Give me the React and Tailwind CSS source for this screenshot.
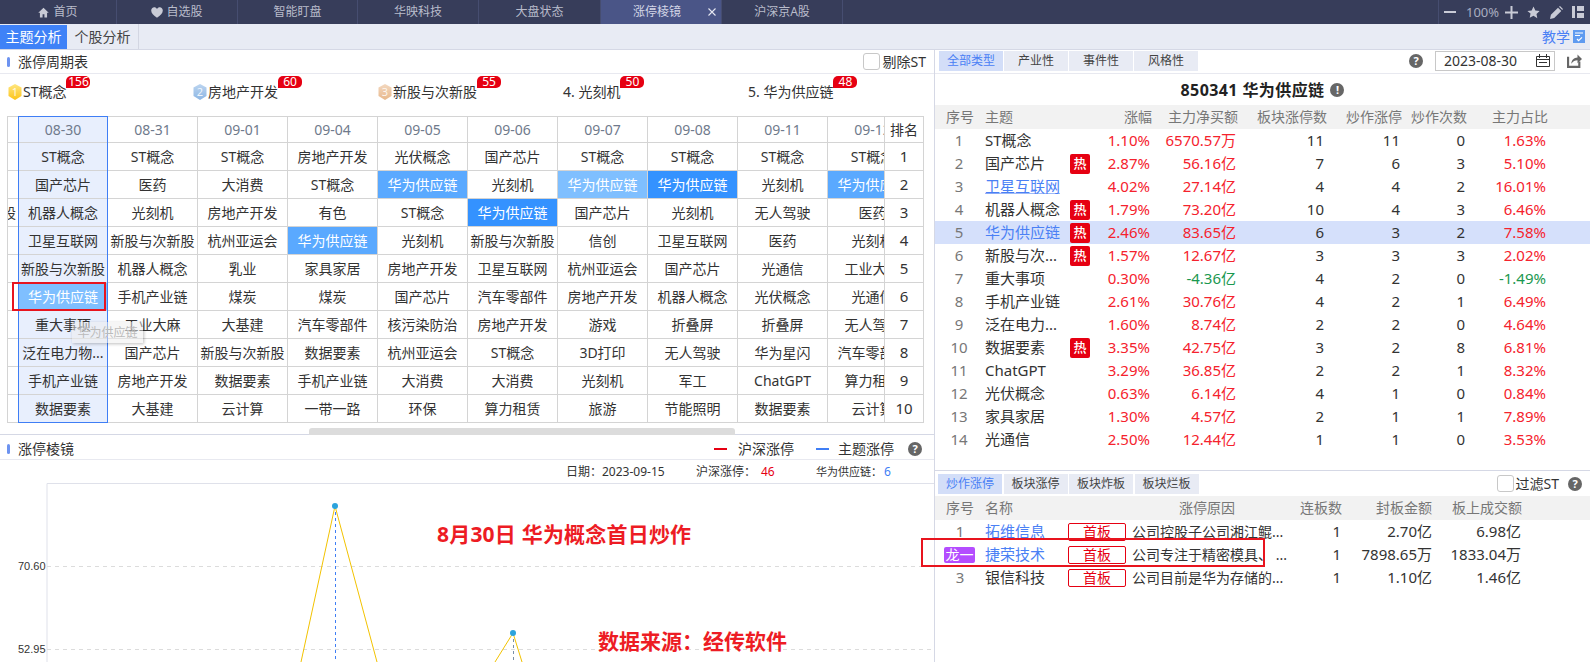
import React from "react";

const Q = ({ className = "" }) => (
  <span className={"flex h-[14px] w-[14px] shrink-0 items-center justify-center rounded-full bg-[#666] text-[11px] font-bold leading-none text-white " + className}>?</span>
);

const navTabs = [
  ["w-[117px]", "首页", "home"],
  ["w-[121px]", "自选股", "heart"],
  ["w-[120px]", "智能盯盘"],
  ["w-[121px]", "华映科技"],
  ["w-[122px]", "大盘状态"],
  ["w-[121px]", "涨停棱镜", "active"],
  ["w-[121px]", "沪深京A股"],
];

function TopBar() {
  return (
    <div className="flex h-6 shrink-0 bg-[#373d5a] text-xs text-[#b9bccb]">
      {navTabs.map(([w, label, kind]) => (
        <div
          key={label}
          className={`relative flex h-full items-center justify-center border-r border-[#464d70] leading-none ${w} ${kind === "active" ? "bg-[#4a5587] pr-2 text-[#d3d6e6]" : ""}`}
        >
          {kind === "home" && (
            <svg width="11" height="11" viewBox="0 0 12 12" className="mr-1">
              <path d="M6 .8 .3 6.2h1.8V11.4h2.9V7.8h2V11.4h2.9V6.2h1.8z" fill="#c9cbd6" />
            </svg>
          )}
          {kind === "heart" && (
            <svg width="12" height="11" viewBox="0 0 12 11" className="mr-[3px]">
              <path d="M6 10.8C2.5 8.2.2 6.2.2 3.5.2 1.6 1.6.3 3.2.3 4.4.3 5.4.9 6 1.9 6.6.9 7.6.3 8.8.3c1.6 0 3 1.3 3 3.2 0 2.7-2.3 4.7-5.8 7.3z" fill="#c9cbd6" />
            </svg>
          )}
          {label}
          {kind === "active" && (
            <svg width="8" height="8" viewBox="0 0 8 8" className="absolute right-[5px] top-[8px]">
              <path d="M.5.5l7 7M7.5.5l-7 7" stroke="#e6e8f2" strokeWidth="1.1" />
            </svg>
          )}
        </div>
      ))}
      <div className="ml-auto flex h-full w-[152px] items-center border-l border-[#464d70] pl-[5px]">
        <svg width="12" height="12" viewBox="0 0 12 12"><rect x="0" y="5" width="12" height="2" fill="#c9cbd6" /></svg>
        <span className="ml-[10px] w-[31px] text-center text-[13px] leading-none text-[#a9adc0]">100%</span>
        <svg width="13" height="13" viewBox="0 0 13 13" className="ml-[8px]"><path d="M5.5 0h2v5.500H13v2H7.500V13h-2V7.500H0v-2h5.500z" fill="#c9cbd6" /></svg>
        <svg width="13" height="13" viewBox="0 0 24 24" className="ml-[9px]"><path d="M12 1l3.400 7.300 7.900 1-5.800 5.400 1.500 7.900L12 18l-7 3.600 1.500-7.900L.7 9.300l7.900-1z" fill="#c9cbd6" /></svg>
        <svg width="13" height="13" viewBox="0 0 13 13" className="ml-[10px]"><path d="M0 13l.9-4.200L8 1.700l3.300 3.300-7.100 7.100zM9 .7l1-.7 3 3-.8 1z" fill="#c9cbd6" /></svg>
        <svg width="12" height="12" viewBox="0 0 12 12" className="ml-[9px]"><path d="M0 0h3v12H0zM5 0h7v5H5zM5 7h7v5H5z" fill="#c9cbd6" /></svg>
      </div>
    </div>
  );
}

function SubBar() {
  return (
    <div className="flex h-[26px] shrink-0 items-stretch border-b border-[#d5d8e5] bg-[#e8ebf4] text-sm leading-none">
      <div className="mt-px flex w-[67px] items-center justify-center bg-[#3f82f7] text-white">主题分析</div>
      <div className="flex w-[72px] items-center justify-center border-r border-[#d3d6e2] text-[#444]">个股分析</div>
      <div className="ml-auto flex items-center pr-[5px] text-[#4a80f5]">
        教学
        <svg width="12" height="13" viewBox="0 0 12 13" className="ml-[3px]">
          <rect width="12" height="13" fill="#5f9bf0" />
          <path d="M2 3h8M2 5.500h5" stroke="#fff" strokeWidth="1" />
          <path d="M4 9l1.600 1.600L9 7.400" stroke="#fff" strokeWidth="1.200" fill="none" />
        </svg>
      </div>
    </div>
  );
}

const Hex = ({ n, c1, c2 }) => (
  <svg width="14" height="16" viewBox="0 0 14 16" className="mr-px shrink-0">
    <defs>
      <linearGradient id={"h" + n} x1="0" y1="0" x2="0" y2="1">
        <stop offset="0" stopColor={c1} />
        <stop offset="1" stopColor={c2} />
      </linearGradient>
    </defs>
    <polygon points="7,0 13.5,3.5 13.5,12 7,16 .5,12 .5,3.5" fill={`url(#h${n})`} />
    <text x="7" y="12" textAnchor="middle" fontSize="11" fill="#fff" fillOpacity="0.85">{n}</text>
  </svg>
);

const ranks = [
  { t: "ST概念", c: 156, icon: <Hex n="1" c1="#ffe680" c2="#fcc419" /> },
  { t: "房地产开发", c: 60, icon: <Hex n="2" c1="#bcd5f0" c2="#8db6e4" /> },
  { t: "新股与次新股", c: 55, icon: <Hex n="3" c1="#f3d8bf" c2="#e8b88c" /> },
  { t: "4. 光刻机", c: 50 },
  { t: "5. 华为供应链", c: 48 },
];

function RankRow() {
  return (
    <div className="flex h-[42px] shrink-0 pl-2">
      {ranks.map((r) => (
        <div key={r.t} className="w-[185px] pt-[8px]">
          <div className="relative flex h-5 w-fit items-center text-sm leading-5 text-[#333]">
            {r.icon}
            {r.t}
            <span className="absolute left-full top-[-6px] flex h-3 w-6 items-center justify-center rounded-[5px] rounded-bl-none bg-[#e60012] text-xs leading-none text-white">{r.c}</span>
          </div>
        </div>
      ))}
    </div>
  );
}

const M = "bg-[#5aa9ff] text-white";
const S = "bg-[#3492ff] text-white";
const L = "bg-[#7fbfff] text-white";

const columns = [
  ["08-30", ["ST概念", "国产芯片", "机器人概念", "卫星互联网", "新股与次新股", "华为供应链", "重大事项", "泛在电力物...", "手机产业链", "数据要素"], { 5: L }],
  ["08-31", ["ST概念", "医药", "光刻机", "新股与次新股", "机器人概念", "手机产业链", "工业大麻", "国产芯片", "房地产开发", "大基建"], {}],
  ["09-01", ["ST概念", "大消费", "房地产开发", "杭州亚运会", "乳业", "煤炭", "大基建", "新股与次新股", "数据要素", "云计算"], {}],
  ["09-04", ["房地产开发", "ST概念", "有色", "华为供应链", "家具家居", "煤炭", "汽车零部件", "数据要素", "手机产业链", "一带一路"], { 3: M }],
  ["09-05", ["光伏概念", "华为供应链", "ST概念", "光刻机", "房地产开发", "国产芯片", "核污染防治", "杭州亚运会", "大消费", "环保"], { 1: M }],
  ["09-06", ["国产芯片", "光刻机", "华为供应链", "新股与次新股", "卫星互联网", "汽车零部件", "房地产开发", "ST概念", "大消费", "算力租赁"], { 2: S }],
  ["09-07", ["ST概念", "华为供应链", "国产芯片", "信创", "杭州亚运会", "房地产开发", "游戏", "3D打印", "光刻机", "旅游"], { 1: L }],
  ["09-08", ["ST概念", "华为供应链", "光刻机", "卫星互联网", "国产芯片", "机器人概念", "折叠屏", "无人驾驶", "军工", "节能照明"], { 1: S }],
  ["09-11", ["ST概念", "光刻机", "无人驾驶", "医药", "光通信", "光伏概念", "折叠屏", "华为星闪", "ChatGPT", "数据要素"], {}],
  ["09-12", ["ST概念", "华为供应链", "医药", "光刻机", "工业大麻", "光通信", "无人驾驶", "汽车零部件", "算力租赁", "云计算"], { 1: M }],
];

function Cell({ className = "", last, children }) {
  return (
    <div className={`flex shrink-0 items-center justify-center whitespace-nowrap border-[#d4d4d4] text-sm leading-none ${last ? "h-[27px]" : "h-[28px] border-b"} ${className}`}>
      {children}
    </div>
  );
}

function Table() {
  const nums = [1, 2, 3, 4, 5, 6, 7, 8, 9, 10];
  return (
    <div className="ml-[7px] flex h-[307px] w-[917px] shrink-0 text-[#333]">
      <div className="flex w-[11px] shrink-0 flex-col overflow-hidden border-y border-l border-[#d4d4d4]">
        <div className="h-[26px] shrink-0 border-b border-[#d4d4d4]" />
        {nums.map((n) => (
          <Cell key={n} last={n === 10} className="!justify-end">
            {n === 3 ? <span className="mr-[2px] w-[8px] overflow-hidden"><span className="-ml-[6px] block">股</span></span> : null}
          </Cell>
        ))}
      </div>
      <div className="flex w-[866px] shrink-0 overflow-hidden">
        {columns.map(([date, items, marks], c) => (
          <div
            key={date}
            className={`flex h-[307px] w-[90px] shrink-0 flex-col border-y border-r ${c === 0 ? "border-l border-[#3f7ef5] bg-[#e8effd]" : "border-[#d4d4d4]"}`}
          >
            <div className="flex h-[26px] shrink-0 items-center justify-center border-b border-[#d4d4d4] text-sm leading-none text-[#6f7a8c]">{date}</div>
            {items.map((t, i) => (
              <Cell key={i} last={i === 9} className={marks[i] || ""}>{t}</Cell>
            ))}
          </div>
        ))}
      </div>
      <div className="flex w-[40px] shrink-0 flex-col border-y border-x border-[#d4d4d4]">
        <div className="flex h-[26px] shrink-0 items-center justify-center border-b border-[#d4d4d4] text-sm leading-none">排名</div>
        {nums.map((n) => (
          <Cell key={n} last={n === 10} className="text-[15px]">{n}</Cell>
        ))}
      </div>
    </div>
  );
}

const SectionMark = () => <span className="mr-[8px] h-[10px] w-[3px] shrink-0 rounded-full bg-[#6d93f0]" />;

function Chart() {
  return (
    <div className="relative min-h-0 flex-1">
      <svg width="934" height="179" viewBox="0 0 934 179" className="block">
        <path d="M47 179V.5H934" stroke="#dfe1ea" fill="none" />
        <path d="M47 83.500H934M47 166.500H934" stroke="#dcdcdc" strokeDasharray="4 4" fill="none" />
        <text x="18" y="87" fontSize="11" fill="#333" fontFamily="Liberation Sans">70.60</text>
        <text x="18" y="170" fontSize="11" fill="#333" fontFamily="Liberation Sans">52.95</text>
        <path d="M335.500 23V179" stroke="#3f7ef5" strokeDasharray="3 3" />
        <path d="M513.500 150V179" stroke="#7a8fa8" strokeDasharray="3 3" />
        <path d="M301 179 335 23 377 179M495 179 513 150 522 179" stroke="#f2c200" fill="none" />
        <circle cx="335" cy="23" r="3" fill="#2ba3dd" />
        <circle cx="513" cy="150" r="3" fill="#2ba3dd" />
      </svg>
      <div className="absolute left-[437px] top-[36px] whitespace-nowrap text-[21px] font-bold leading-[30px] tracking-[0.2px] text-[#ed1c24]">8月30日 华为概念首日炒作</div>
      <div className="absolute left-[598px] top-[143px] whitespace-nowrap text-[21px] font-bold leading-[30px] text-[#ed1c24]">数据来源：经传软件</div>
    </div>
  );
}

function LeftPanel() {
  return (
    <div className="flex h-full w-[935px] shrink-0 flex-col border-r border-[#d5d8e5]">
      <div className="flex h-6 shrink-0 items-center border-b border-[#e8e9f0] pl-[7px] text-sm leading-none text-[#333]">
        <SectionMark />
        涨停周期表
        <span className="ml-auto mr-[3px] h-[17px] w-[17px] rounded-[3px] border border-[#c8c8c8]" />
        <span className="mr-[8px]">剔除ST</span>
      </div>
      <RankRow />
      <Table />
      <div className="flex h-3 shrink-0 items-start border-b border-[#d5d8e5] pl-[309px] pt-[5px]">
        <div className="h-[7px] w-[426px] rounded-t-[3px] bg-[#dcdcdc]" />
      </div>
      <div className="flex h-[25px] shrink-0 items-center border-b border-[#e8e9f0] pl-[7px] pt-[3px] text-sm leading-none text-[#333]">
        <SectionMark />
        涨停棱镜
        <span className="ml-[640px] h-[2px] w-[13px] bg-[#e60012]" />
        <span className="ml-[11px]">沪深涨停</span>
        <span className="ml-[22px] h-[2px] w-[13px] bg-[#3f7ef5]" />
        <span className="ml-[9px]">主题涨停</span>
        <Q className="ml-[14px]" />
      </div>
      <div className="flex h-[23px] shrink-0 items-center whitespace-nowrap pl-[566px] text-xs leading-none text-[#333]">
        <span className="w-[130px]">日期：2023-09-15</span>
        <span className="w-[65px]">沪深涨停：</span>
        <span className="w-[55px] text-[#e60012]">46</span>
        <span className="w-[68px] text-[11px]">华为供应链：</span>
        <span className="text-[#3f7ef5]">6</span>
      </div>
      <Chart />
    </div>
  );
}

const Badge = () => (
  <span className="flex h-5 w-5 items-center justify-center rounded-[2px] bg-[#e60012] text-[13px] font-medium leading-none text-white">热</span>
);

const R = "text-[#f5222d]";
const G = "text-[#1a9850]";
const mainRows = [
  ["ST概念", 0, "1.10%", "6570.57万", 11, 11, 0, "1.63%"],
  ["国产芯片", 1, "2.87%", "56.16亿", 7, 6, 3, "5.10%"],
  ["卫星互联网", 0, "4.02%", "27.14亿", 4, 4, 2, "16.01%", "link"],
  ["机器人概念", 1, "1.79%", "73.20亿", 10, 4, 3, "6.46%"],
  ["华为供应链", 1, "2.46%", "83.65亿", 6, 3, 2, "7.58%", "sel"],
  ["新股与次...", 1, "1.57%", "12.67亿", 3, 3, 3, "2.02%"],
  ["重大事项", 0, "0.30%", "-4.36亿", 4, 2, 0, "-1.49%"],
  ["手机产业链", 0, "2.61%", "30.76亿", 4, 2, 1, "6.49%"],
  ["泛在电力...", 0, "1.60%", "8.74亿", 2, 2, 0, "4.64%"],
  ["数据要素", 1, "3.35%", "42.75亿", 3, 2, 8, "6.81%"],
  ["ChatGPT", 0, "3.29%", "36.85亿", 2, 2, 1, "8.32%"],
  ["光伏概念", 0, "0.63%", "6.14亿", 4, 1, 0, "0.84%"],
  ["家具家居", 0, "1.30%", "4.57亿", 2, 1, 1, "7.89%"],
  ["光通信", 0, "2.50%", "12.44亿", 1, 1, 0, "3.53%"],
];
const mainGrid = "grid grid-cols-[48px_87px_20px_62px_86px_89px_75px_65px_81px] items-center";

function MainTable() {
  return (
    <div className="shrink-0">
      <div className={`${mainGrid} h-6 bg-[#f2f2f2] text-sm leading-none text-[#777]`}>
        <span className="pl-[11px]">序号</span>
        <span className="pl-[2px]">主题</span>
        <span />
        <span className="text-right">涨幅</span>
        <span className="text-right">主力净买额</span>
        <span className="text-right">板块涨停数</span>
        <span className="text-right">炒作涨停</span>
        <span className="text-right">炒作次数</span>
        <span className="text-right">主力占比</span>
      </div>
      {mainRows.map((r, i) => {
        const neg = r[3].startsWith("-");
        return (
          <div key={r[0]} className={`${mainGrid} h-[23px] text-[15px] leading-none text-[#333] ${r[8] === "sel" ? "bg-[#d5e0fb]" : ""}`}>
            <span className="text-center text-[#777]">{i + 1}</span>
            <span className={`whitespace-nowrap pl-[2px] ${r[8] === "link" ? "text-[#4a80f5] underline decoration-[#9db9f8]" : r[8] === "sel" ? "text-[#4a80f5]" : ""}`}>{r[0]}</span>
            <span>{r[1] ? <Badge /> : null}</span>
            <span className={`pr-[2px] text-right ${R}`}>{r[2]}</span>
            <span className={`pr-[2px] text-right ${neg ? G : R}`}>{r[3]}</span>
            <span className="pr-[3px] text-right">{r[4]}</span>
            <span className="pr-[2px] text-right">{r[5]}</span>
            <span className="pr-[2px] text-right">{r[6]}</span>
            <span className={`pr-[2px] text-right ${r[7].startsWith("-") ? G : R}`}>{r[7]}</span>
          </div>
        );
      })}
    </div>
  );
}

const stockGrid = "grid grid-cols-[50px_83px_64px_150px_60px_90px_90px] items-center";
const stocks = [
  ["1", "拓维信息", "公司控股子公司湘江鲲...", "1", "2.70亿", "6.98亿", "blue"],
  ["龙一", "捷荣技术", "公司专注于精密模具、 ...", "1", "7898.65万", "1833.04万", "blue"],
  ["3", "银信科技", "公司目前是华为存储的...", "1", "1.10亿", "1.46亿", ""],
];

function StockTable() {
  return (
    <div>
      <div className={`${stockGrid} h-6 bg-[#f2f2f2] text-sm leading-none text-[#777]`}>
        <span className="pl-[11px]">序号</span>
        <span>名称</span>
        <span />
        <span className="text-center">涨停原因</span>
        <span className="text-right">连板数</span>
        <span className="text-right">封板金额</span>
        <span className="text-right">板上成交额</span>
      </div>
      {stocks.map((s) => (
        <div key={s[1]} className={`${stockGrid} h-[23px] leading-none text-[#333]`}>
          {s[0] === "龙一" ? (
            <span className="ml-[9px] flex h-4 w-[31px] items-center justify-center rounded-[2px] bg-[#b44dff] text-sm text-white">龙一</span>
          ) : (
            <span className="text-center text-[15px] text-[#777]">{s[0]}</span>
          )}
          <span className={`text-[15px] ${s[6] ? "text-[#4a80f5]" : ""}`}>{s[1]}</span>
          <span className="flex h-[18px] w-[58px] items-center justify-center rounded-[2px] border border-[#e60012] text-sm text-[#e60012]">首板</span>
          <span className="whitespace-nowrap text-sm leading-[18px]">{s[2]}</span>
          <span className="pr-[1px] text-right text-[15px]">{s[3]}</span>
          <span className="text-right text-[15px]">{s[4]}</span>
          <span className="pr-[1px] text-right text-[15px]">{s[5]}</span>
        </div>
      ))}
    </div>
  );
}

function RightPanel() {
  const tabs = ["全部类型", "产业性", "事件性", "风格性"];
  const tabs2 = ["炒作涨停", "板块涨停", "板块炸板", "板块烂板"];
  return (
    <div className="flex h-full min-w-0 flex-1 flex-col">
      <div className="flex h-6 shrink-0 items-center border-b border-[#e8e9f0] pb-[2px] pl-1 leading-none">
        <div className="flex gap-px text-xs">
          {tabs.map((t, i) => (
            <span key={t} className={`flex h-5 w-[64px] items-center justify-center ${i === 0 ? "bg-[#d3def8] text-[#4a80f5]" : "bg-[#e8ebf4] text-[#444]"}`}>{t}</span>
          ))}
        </div>
        <Q className="ml-[211px]" />
        <div className="ml-[12px] flex h-5 w-[120px] items-center border border-[#c8c8c8] pl-2 text-sm text-[#333]">
          2023-08-30
          <svg width="14" height="13" viewBox="0 0 14 13" className="ml-auto mr-[4px]">
            <path d="M.5 2.500h13v10H.5zM3.500 0v4M10.500 0v4M.5 5.500h13M3 8.500h8" stroke="#333" fill="none" />
          </svg>
        </div>
        <svg width="15" height="15" viewBox="0 0 14 14" className="ml-[12px]">
          <path d="M1 3.500V13h10.500V8" stroke="#666" strokeWidth="2" fill="none" />
          <path d="M4 10c.3-3.600 2.600-5.700 5.800-5.800V1.500L14 5.500 9.800 9.500V6.800C7.500 6.800 5.500 7.800 4 10z" fill="#666" />
        </svg>
      </div>
      <div className="flex h-[31px] shrink-0 items-center justify-center gap-[6px] text-base font-bold leading-none text-[#222]">
        <span className="tracking-[0.4px]">850341 华为供应链</span>
        <span className="flex h-[14px] w-[14px] items-center justify-center rounded-full bg-[#666] text-[11px] font-bold leading-none text-white">!</span>
      </div>
      <MainTable />
      <div className="h-[20px] shrink-0 border-b border-[#d5d8e5]" />
      <div className="flex h-[25px] shrink-0 items-center pl-[3px] leading-none">
        <div className="flex gap-[1.5px] text-xs">
          {tabs2.map((t, i) => (
            <span key={t} className={`flex h-5 w-[64px] items-center justify-center ${i === 0 ? "bg-[#d3def8] text-[#4a80f5]" : "bg-[#e8ebf4] text-[#444]"}`}>{t}</span>
          ))}
        </div>
        <span className="ml-auto h-[17px] w-[17px] rounded-[3px] border border-[#c8c8c8]" />
        <span className="ml-[2px] text-sm text-[#333]">过滤ST</span>
        <Q className="ml-[9px] mr-[8px]" />
      </div>
      <StockTable />
    </div>
  );
}

export default function App() {
  return (
    <div className="relative flex h-[662px] w-[1590px] flex-col overflow-hidden bg-white font-['Noto_Sans','Noto_Sans_CJK_SC',sans-serif]">
      <TopBar />
      <SubBar />
      <div className="flex min-h-0 flex-1">
        <LeftPanel />
        <RightPanel />
      </div>
      <div className="pointer-events-none absolute left-[12px] top-[282px] h-[29px] w-[94px] border-2 border-[#e8141e]" />
      <div className="pointer-events-none absolute left-[72px] top-[322px] flex h-[21px] w-[71px] items-center justify-center bg-[#eeeeee]/50 text-xs leading-none text-[#bbb] shadow-[1px_1px_3px_rgba(0,0,0,0.25)]">华为供应链</div>
      <div className="pointer-events-none absolute left-[921px] top-[538px] h-[29px] w-[344px] border-2 border-[#e8141e]" />
    </div>
  );
}
